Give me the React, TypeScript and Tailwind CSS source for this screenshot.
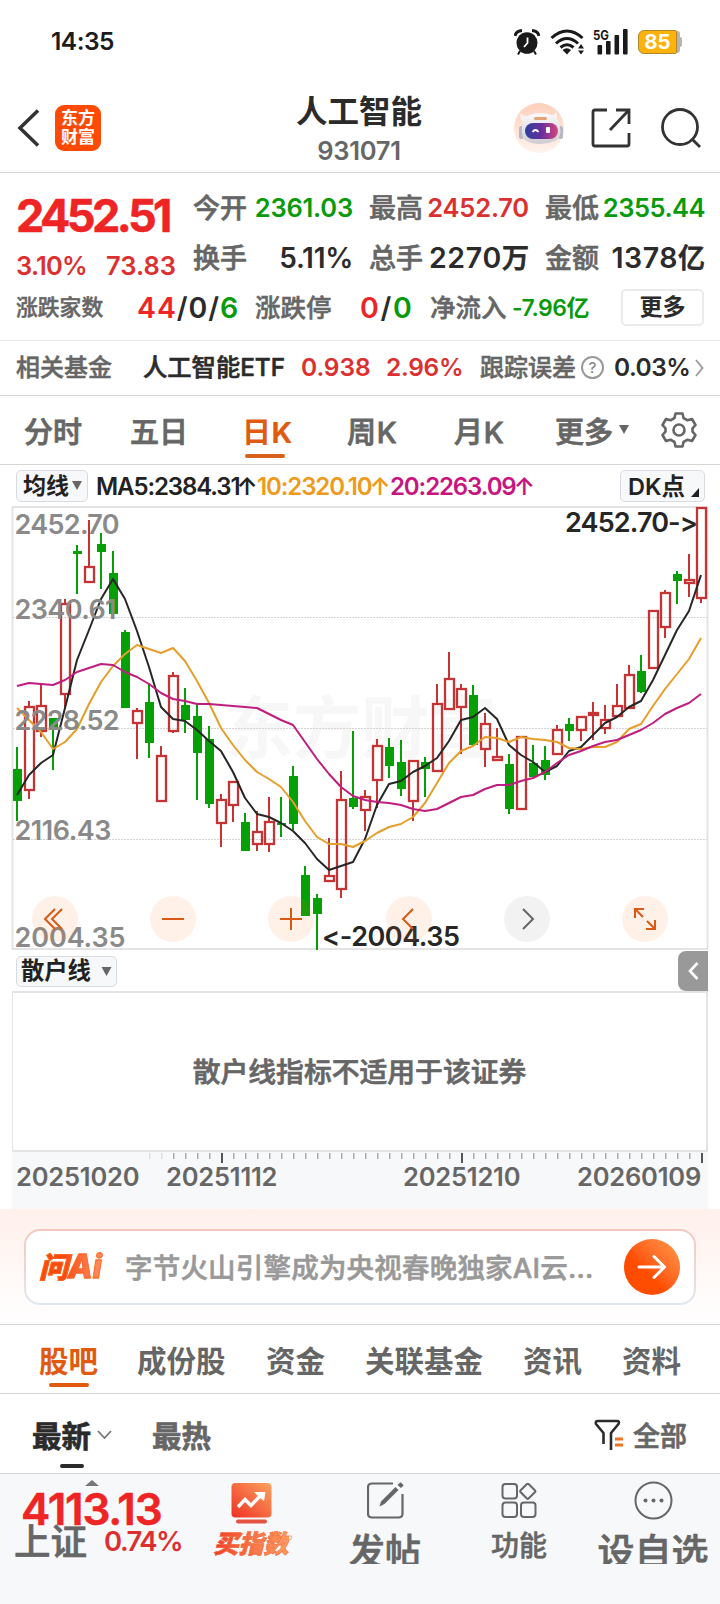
import type { ReactNode } from "react";

type Candle = [up: 0 | 1, high: number, top: number, bottom: number, low: number];

// y values are measured from the top edge of the chart svg
const CANDLES: Candle[] = [
  [0, 247, 269, 301, 321], [1, 201, 207, 290, 299], [1, 185, 206, 231, 237], [0, 218, 218, 228, 270],
  [1, 99, 104, 194, 208], [0, 45, 51, 54, 94], [1, 20, 67, 82, 83], [0, 33, 44, 52, 89],
  [0, 51, 73, 114, 114], [0, 130, 132, 208, 208], [1, 208, 211, 223, 259], [0, 183, 202, 243, 258],
  [1, 246, 256, 301, 301], [1, 172, 176, 231, 233], [0, 188, 205, 220, 233], [0, 203, 216, 253, 300],
  [0, 226, 239, 304, 308], [1, 294, 300, 323, 347], [1, 282, 282, 305, 322], [0, 313, 322, 351, 351],
  [1, 311, 332, 344, 351], [1, 297, 322, 344, 352], [0, 297, 323, 325, 337], [0, 266, 276, 324, 330],
  [0, 366, 375, 416, 416], [0, 394, 398, 414, 450], [1, 338, 376, 381, 381], [1, 271, 300, 389, 398],
  [0, 231, 298, 307, 309], [1, 290, 297, 310, 331], [1, 239, 246, 280, 308], [0, 238, 247, 266, 278],
  [0, 240, 262, 289, 296], [1, 261, 261, 301, 321], [0, 257, 262, 269, 297], [1, 184, 204, 271, 271],
  [1, 152, 179, 209, 209], [1, 184, 189, 207, 254], [0, 185, 195, 245, 245], [1, 213, 224, 249, 267],
  [1, 228, 257, 260, 260], [0, 254, 264, 309, 314], [1, 237, 237, 309, 309], [0, 245, 263, 277, 277],
  [0, 246, 260, 275, 280], [1, 225, 230, 254, 254], [0, 218, 224, 231, 241], [1, 217, 217, 230, 241],
  [1, 202, 213, 215, 240], [1, 205, 220, 228, 234], [1, 184, 206, 216, 216], [1, 165, 175, 208, 208],
  [0, 155, 171, 192, 193], [1, 110, 111, 168, 168], [1, 90, 93, 127, 138], [0, 71, 74, 81, 104],
  [1, 54, 80, 83, 97], [1, 8, 8, 98, 103],
];

const MA5 = [
  295, 275, 263, 255, 208, 160, 130, 99, 79, 99, 131, 167, 207, 219, 221, 230, 241, 251, 272, 298, 314, 317, 323, 331, 343,
  359, 370, 366, 362, 339, 305, 284, 281, 272, 266, 258, 241, 220, 217, 208, 219, 245, 255, 262, 272, 266, 251, 247, 235,
  223, 217, 207, 201, 180, 155, 130, 111, 75,
];
const MA10 = [
  208, 220, 232, 249, 242, 229, 204, 182, 166, 154, 145, 149, 153, 148, 161, 181, 203, 228, 245, 260, 272, 279, 287, 302,
  321, 337, 344, 344, 347, 341, 333, 327, 324, 317, 303, 283, 263, 251, 246, 237, 238, 242, 237, 239, 240, 242, 248, 249,
  247, 247, 242, 229, 224, 206, 189, 174, 159, 138,
];
const MA20 = [
  186, 183, 184, 185, 180, 172, 168, 164, 165, 172, 177, 184, 193, 199, 201, 204, 204, 205, 206, 207, 208, 214, 220, 225,
  242, 259, 274, 287, 296, 300, 302, 303, 305, 309, 311, 309, 303, 297, 295, 289, 285, 285, 281, 278, 272, 263, 255, 251,
  246, 242, 240, 235, 230, 223, 214, 208, 203, 194,
];

const AXIS_LABELS = [
  { text: "2452.70", y: 34, width: 105 },
  { text: "2340.61", y: 119, width: 102 },
  { text: "2228.52", y: 230, width: 105 },
  { text: "2116.43", y: 340, width: 97 },
  { text: "2004.35", y: 447, width: 111 },
];

const cx = (i: number) => 17 + i * 12;
const toPoints = (values: number[]) => values.map((v, i) => `${cx(i)},${v}`).join(" ");

function StatusBar() {
  return (
    <div className="flex h-[83px] items-center justify-between pl-[51px] pr-[38px]">
      <span className="text-[24.5px] font-semibold tracking-[-0.5px] text-[#1c1c1c]">14:35</span>
      <div className="flex items-center">
        <svg width="26" height="26" viewBox="0 0 26 26" fill="#1a1a1a">
          <ellipse cx="13" cy="14" rx="10.5" ry="10.8" />
          <path d="M1 7 Q2 2 8 1.5 M25 7 Q24 2 18 1.5" fill="none" stroke="#1a1a1a" strokeWidth="3" />
          <path d="M6 22 L4 25.5 M20 22 L22 25.5" stroke="#1a1a1a" strokeWidth="2" />
          <path d="M13.5 8.5 V14 L10 18" fill="none" stroke="#fff" strokeWidth="1.8" />
        </svg>
        <svg className="ml-[10px]" width="35" height="26" viewBox="0 0 35 26" fill="none" stroke="#1a1a1a" strokeWidth="3">
          <path d="M1.5 9 Q17 -5 32.5 9" />
          <path d="M6 14.5 Q17 4.5 28 14.5" />
          <path d="M10.5 18.5 Q17 13 23.5 18.5" />
          <path d="M12.5 21 Q17 17.5 21 21 L17 25.5 Z" fill="#1a1a1a" stroke="none" />
          <path d="M28 19.5 L31 15 L34 19.5 Z M28 21.5 L31 25.5 L34 21.5 Z" fill="#1a1a1a" stroke="none" />
        </svg>
        <svg className="ml-[8px]" width="36" height="27" viewBox="0 -1 36 27" fill="#1a1a1a">
          <text x="0" y="10.5" fontSize="13.5" fontWeight="700" textLength="16" lengthAdjust="spacingAndGlyphs">5G</text>
          <rect x="4.5" y="16" width="4.6" height="9.5" rx="1" />
          <rect x="13" y="12" width="4.6" height="13.5" rx="1" />
          <rect x="21.5" y="6" width="4.6" height="19.5" rx="1" />
          <rect x="30" y="0" width="4.6" height="25.5" rx="1" />
        </svg>
        <div className="ml-[9px] mt-[1px] flex items-center">
          <div className="flex h-6 w-[39px] items-center justify-center rounded-l-[6px] rounded-r-[2px] border border-[#b08a2a] bg-[#fdb30b] text-[20.5px] font-bold leading-none text-white">
            85
          </div>
          <div className="h-[22px] w-[3px] rounded-r-[4px] bg-[#b5b5b5]" />
          <div className="h-[10px] w-[2px] rounded-r-[2px] bg-[#b5b5b5]" />
        </div>
      </div>
    </div>
  );
}

function Header() {
  return (
    <header className="flex h-[90px] items-center border-b border-[#d6d6d6] pl-[17px] pr-[19px]">
      <div className="flex flex-1 items-center">
        <svg width="23" height="38" viewBox="0 0 23 38" fill="none" stroke="#333" strokeWidth="3.6">
          <path d="M21 1.5 L3 19 L21 36.5" />
        </svg>
        <div className="ml-[15px] flex h-[46px] w-[46px] flex-col items-center justify-center rounded-[9px] bg-[#ff4a05] text-[17px] font-bold leading-[19px] text-white">
          <span>东方</span>
          <span>财富</span>
        </div>
      </div>
      <div className="flex flex-col items-center pt-[5px]">
        <h1 className="text-[31.5px] font-bold leading-[36px] text-[#2b2b2b]">人工智能</h1>
        <span className="mt-[6px] text-[25.5px] font-semibold leading-[30px] tracking-[-0.3px] text-[#666]">931071</span>
      </div>
      <div className="flex flex-1 items-center justify-end">
        <svg width="50" height="50" viewBox="0 0 50 50">
          <defs>
            <linearGradient id="halo" x1="0" y1="0" x2="0" y2="1">
              <stop offset="0" stopColor="#fdd0bb" />
              <stop offset="1" stopColor="#fff3ee" />
            </linearGradient>
            <linearGradient id="visor" x1="0" y1="0" x2="1" y2="0">
              <stop offset="0" stopColor="#2d3f9e" />
              <stop offset="0.5" stopColor="#6a2f9c" />
              <stop offset="1" stopColor="#d6467e" />
            </linearGradient>
            <linearGradient id="shell" x1="0" y1="0" x2="0" y2="1">
              <stop offset="0" stopColor="#fbfafb" />
              <stop offset="1" stopColor="#cfccd3" />
            </linearGradient>
          </defs>
          <circle cx="25" cy="25" r="25" fill="url(#halo)" />
          <path d="M12 20 Q4 17 7 10 Q10 14 17 13 M38 19 Q46 16 42 9 Q40 13 33 13" fill="#f6f2f2" />
          <rect x="5" y="23" width="5" height="13" rx="2.5" fill="#b9b6c2" />
          <rect x="44" y="23" width="5" height="13" rx="2.5" fill="#b9b6c2" />
          <path d="M8 24 Q9 10 26 10 Q44 10 46 24 Q48 34 41 38 Q34 41 26 41 Q17 41 11 37 Q7 34 8 24 Z" fill="url(#shell)" />
          <rect x="20" y="14" width="13" height="3" rx="1.5" fill="#e3a478" />
          <rect x="11" y="20" width="33" height="16" rx="8" fill="url(#visor)" />
          <path d="M18.5 29 Q21.5 25 24.5 29" fill="none" stroke="#fff" strokeWidth="1.8" />
          <rect x="32" y="24" width="4" height="6" rx="1" fill="#fff" />
        </svg>
        <svg className="ml-[27px]" width="40" height="40" viewBox="0 0 40 40" fill="none" stroke="#333" strokeWidth="2.8">
          <path d="M16 2 H4 Q2 2 2 4 V36 Q2 38 4 38 H36 Q38 38 38 36 V25" />
          <path d="M25 2 H38 V16 M37 3 L19 22" />
        </svg>
        <svg className="ml-[30px]" width="40" height="40" viewBox="0 0 40 40" fill="none" stroke="#333" strokeWidth="2.8">
          <circle cx="19" cy="19" r="17.5" />
          <path d="M30.5 30.5 L39 39" />
        </svg>
      </div>
    </header>
  );
}

function Stat({ label, children }: { label: string; children: ReactNode }) {
  return (
    <div className="flex h-[50px] w-[160px] items-center justify-between whitespace-nowrap leading-none">
      <span className="pt-[1px] text-[27px] font-medium text-[#666] [-webkit-text-stroke:0.6px]">{label}</span>
      {children}
    </div>
  );
}

function Quote() {
  return (
    <section className="h-[168px] border-b border-[#e8e8e8]">
      <div className="flex">
        <div className="w-[193px] shrink-0 pl-[16px] pt-[19px] text-[#ee2524]">
          <div className="text-[45px] font-bold leading-[48px] tracking-[-3.6px] [-webkit-text-stroke:0.5px]">2452.51</div>
          <div className="mt-[12px] flex text-[25.5px] font-semibold leading-[28px] tracking-[-0.5px] text-[#dc3030]">
            <span className="w-[90px] tracking-[-0.8px]">3.10%</span>
            <span className="tracking-[0px]">73.83</span>
          </div>
        </div>
        <div className="grid grid-cols-3 gap-x-4 pt-[10px]">
          <Stat label="今开">
            <span className="text-[25.5px] font-semibold tracking-[-0.2px] text-[#079a0a]">2361.03</span>
          </Stat>
          <Stat label="最高">
            <span className="text-[25.5px] font-semibold tracking-[-0.2px] text-[#dc3030]">2452.70</span>
          </Stat>
          <Stat label="最低">
            <span className="text-[25.5px] font-semibold tracking-[-0.5px] text-[#079a0a]">2355.44</span>
          </Stat>
          <Stat label="换手">
            <span className="text-[28px] font-semibold tracking-[-0.3px] text-[#2b2b2b]">5.11%</span>
          </Stat>
          <Stat label="总手">
            <span className="text-[28.5px] font-semibold tracking-[0.7px] text-[#2b2b2b]">
              2270<span className="text-[27px] font-medium tracking-[0px] [-webkit-text-stroke:0.8px]">万</span>
            </span>
          </Stat>
          <Stat label="金额">
            <span className="text-[28.5px] font-semibold tracking-[0.5px] text-[#2b2b2b]">
              1378<span className="text-[27px] font-medium tracking-[0px] [-webkit-text-stroke:0.8px]">亿</span>
            </span>
          </Stat>
        </div>
      </div>
      <div className="flex h-[50px] items-center whitespace-nowrap pl-[16px] font-medium leading-none text-[#666]">
        <span className="w-[121px] text-[21.8px] [-webkit-text-stroke:0.5px]">涨跌家数</span>
        <span className="w-[118px] text-[28.5px] font-semibold tracking-[0.9px] text-[#2b2b2b]">
          <span className="text-[#ee2524]">44</span>/0/<span className="text-[#079a0a]">6</span>
        </span>
        <span className="w-[105px] text-[25.5px] [-webkit-text-stroke:0.5px]">涨跌停</span>
        <span className="w-[70px] text-[28.5px] font-semibold tracking-[1.7px] text-[#2b2b2b]">
          <span className="text-[#ee2524]">0</span>/<span className="text-[#079a0a]">0</span>
        </span>
        <span className="w-[82px] text-[25.5px] [-webkit-text-stroke:0.5px]">净流入</span>
        <span className="w-[109px] text-[23px] font-semibold tracking-[-0.5px] text-[#079a0a]">-7.96亿</span>
        <span className="flex h-[37px] w-[83px] -translate-y-px items-center justify-center rounded-[5px] border-2 border-[#ebebeb] text-[23px] font-bold text-[#2b2b2b]">
          更多
        </span>
      </div>
    </section>
  );
}

function FundRow() {
  return (
    <section className="flex h-[55px] items-center whitespace-nowrap border-b border-[#d6d6d6] pb-[1px] pl-[16px] leading-none text-[#2b2b2b]">
      <span className="w-[127px] text-[24px] font-medium text-[#666] [-webkit-text-stroke:0.5px]">相关基金</span>
      <span className="w-[158px] text-[24.3px] font-medium [-webkit-text-stroke:0.6px]">人工智能ETF</span>
      <span className="w-[85px] text-[24.5px] font-semibold tracking-[-0.1px] text-[#dc3030]">0.938</span>
      <span className="w-[94px] text-[24.5px] font-semibold tracking-[-0.3px] text-[#dc3030]">2.96%</span>
      <span className="w-[101px] text-[24px] font-medium text-[#666] [-webkit-text-stroke:0.5px]">跟踪误差</span>
      <span className="flex h-[23px] w-[23px] items-center justify-center rounded-full border-2 border-[#999] text-[15px] font-medium text-[#888]">
        ?
      </span>
      <span className="ml-[10px] w-[81px] text-[24.5px] font-semibold tracking-[-0.5px]">0.03%</span>
      <svg width="9" height="18" viewBox="0 0 9 18" fill="none" stroke="#999" strokeWidth="1.8">
        <path d="M1 1 L7.5 9 L1 17" />
      </svg>
    </section>
  );
}

function PeriodTabs() {
  return (
    <nav className="flex h-[69px] items-center whitespace-nowrap border-b border-[#d6d6d6] pl-[24px] pt-[4px] text-[29px] font-medium leading-none text-[#666] [-webkit-text-stroke:0.8px]">
      <span className="w-[106px]">分时</span>
      <span className="w-[112px]">五日</span>
      <span className="relative w-[105px] font-bold tracking-[0.4px] text-[#e05a10] [-webkit-text-stroke:0px]">
        日K
        <span className="absolute -bottom-[11px] left-[3px] h-[4px] w-[40px] rounded-full bg-[#d9601a]" />
      </span>
      <span className="w-[107px] tracking-[0.8px]">周K</span>
      <span className="w-[101px] tracking-[0.8px]">月K</span>
      <span className="w-[64px]">更多</span>
      <svg className="-mt-[5px]" width="10" height="9" viewBox="0 0 10 9" fill="#666">
        <path d="M0 0 H10 L5 9 Z" />
      </svg>
      <svg className="ml-[32px] -mt-[5px]" width="36" height="36" viewBox="0 0 36 36" fill="none" stroke="#666" strokeWidth="2.6" strokeLinejoin="round">
        <path d="M14.5 1.5 H21.5 L22.5 6 L26.5 8.3 L31 7 L34.5 13 L31.5 16.3 V19.7 L34.5 23 L31 29 L26.5 27.7 L22.5 30 L21.5 34.5 H14.5 L13.5 30 L9.5 27.7 L5 29 L1.5 23 L4.5 19.7 V16.3 L1.5 13 L5 7 L9.5 8.3 L13.5 6 Z" />
        <circle cx="18" cy="18" r="5.5" />
      </svg>
    </nav>
  );
}

function MaRow() {
  return (
    <div className="flex h-[41px] items-center whitespace-nowrap pl-[16px] leading-none text-[#222]">
      <div className="flex h-[32px] w-[72px] items-center rounded-[5px] border border-[#d8dbe0] bg-[#f7f8fa] pl-[6px]">
        <span className="pt-[1px] text-[23px] font-bold">均线</span>
        <svg className="ml-[3px]" width="10" height="9" viewBox="0 0 10 9" fill="#666">
          <path d="M0 0 H10 L5 9 Z" />
        </svg>
      </div>
      <div className="ml-[8px] flex w-[524px] pt-[2px] text-[24px] font-semibold tracking-[-1.1px]">
        <span className="w-[161px]">
          MA5:2384.31<span className="-ml-[3px]">↑</span>
        </span>
        <span className="w-[133px] text-[#ee9a1c]">
          10:2320.10<span className="-ml-[2px]">↑</span>
        </span>
        <span className="text-[#c7157f]">
          20:2263.09<span className="-ml-[2px]">↑</span>
        </span>
      </div>
      <div className="flex h-[32px] w-[85px] items-center rounded-[5px] border border-[#d8dbe0] bg-[#f7f8fa] pl-[7px]">
        <span className="w-[63px] pt-[2px] text-[23.5px] font-semibold">DK点</span>
        <svg className="mt-[13px]" width="8" height="9" viewBox="0 0 8 9" fill="#222">
          <path d="M8 0 V9 H0 Z" />
        </svg>
      </div>
    </div>
  );
}

function Chart() {
  return (
    <svg className="-mt-[6px] block [font-feature-settings:'calt'_0]" width="720" height="451" viewBox="0 0 720 451">
      <text x="225" y="253" fontSize="68" fontWeight="700" fill="#f7f7f8" textLength="272">东方财富</text>
      <rect x="12.5" y="7" width="695" height="442" fill="none" stroke="#e2e2e4" strokeWidth="1.8" />
      {[117.5, 228.5, 339.5].map((y) => (
        <path key={y} d={`M13 ${y} H707`} stroke="#d4d4d4" strokeDasharray="2 1" />
      ))}
      {CANDLES.map(([up, high, top, bottom, low], i) =>
        up ? (
          <g key={i} stroke="#c43434" strokeWidth="2" fill="none">
            <path d={`M${cx(i)} ${high} V${top} M${cx(i)} ${bottom} V${low}`} />
            <rect x={cx(i) - 4} y={top} width="9" height={bottom - top} strokeWidth="2.3" />
          </g>
        ) : (
          <g key={i} fill="#04a006">
            <rect x={cx(i) - 1} y={high} width="2" height={low - high} />
            <rect x={cx(i) - 4} y={top} width="9" height={bottom - top} />
          </g>
        ),
      )}
      <g fill="none" strokeWidth="2" strokeLinejoin="round">
        <polyline points={toPoints(MA5)} stroke="#262626" />
        <polyline points={toPoints(MA10)} stroke="#e59e2a" />
        <polyline points={toPoints(MA20)} stroke="#bf1d80" />
      </g>
      <g fontSize="27" fontWeight="600" fill="#8a8a8a">
        {AXIS_LABELS.map(({ text, y, width }) => (
          <text key={text} x="14.5" y={y} textLength={width}>{text}</text>
        ))}
      </g>
      <g fontSize="27" fontWeight="600" fill="#262626">
        <text x="565" y="32" textLength="133">2452.70-&gt;</text>
        <text x="322" y="446" textLength="138">&lt;-2004.35</text>
      </g>
      {[55, 173, 291, 409, 645].map((x) => (
        <circle key={x} cx={x} cy="419" r="23" fill="#ff6a1e" fillOpacity="0.1" />
      ))}
      <circle cx="527" cy="419" r="23" fill="#000" fillOpacity="0.05" />
      <g fill="none" stroke="#d95a15" strokeWidth="2">
        <path d="M55 409 L45 419 L55 429 M62 409 L52 419 L62 429" />
        <path d="M162 419 H184" />
        <path d="M280 419 H302 M291 408 V430" />
        <path d="M413 409 L403 419 L413 429" />
        <path d="M635 418 V409 H644 M635 409 L643 417 M655 420 V429 H646 M655 429 L647 421" />
      </g>
      <path d="M523 409 L533 419 L523 429" fill="none" stroke="#666" strokeWidth="2" />
    </svg>
  );
}

function RetailPanel() {
  return (
    <section className="px-[12px]">
      <div className="flex h-[40px] items-center justify-between leading-none">
        <div className="ml-[4px] flex h-[31px] w-[101px] items-center rounded-[5px] border border-[#d8dbe0] bg-[#f7f8fa] pl-[4px]">
          <span className="text-[23.3px] font-bold text-[#222]">散户线</span>
          <svg className="ml-[10px]" width="11" height="9" viewBox="0 0 10 9" fill="#666">
            <path d="M0 0 H10 L5 9 Z" />
          </svg>
        </div>
        <div className="flex h-[40px] w-[30px] items-center rounded-l-[8px] bg-[#999] pl-[10px]">
          <svg width="11" height="18" viewBox="0 0 11 18" fill="none" stroke="#fff" strokeWidth="2.6">
            <path d="M9.5 1 L2 9 L9.5 17" />
          </svg>
        </div>
      </div>
      <div className="flex h-[161px] items-center justify-center border-2 border-l border-[#e4e4e6] pt-[2px] text-[27.8px] font-medium text-[#666] [-webkit-text-stroke:0.7px]">
        散户线指标不适用于该证券
      </div>
      <div className="h-[57px] bg-[#f7f8fa]">
        <svg className="block" width="696" height="12" viewBox="12 0 696 12">
          {Array.from({ length: 47 }, (_, i) => {
            const major = i % 20 === 6;
            return (
              <rect
                key={i}
                x={149 + i * 12}
                y="1"
                width={major ? 2 : 1.5}
                height={major ? 10 : 6}
                fill={major ? "#555" : i < 2 ? "#ddd" : "#aaa"}
              />
            );
          })}
        </svg>
        <div className="mt-[1px] flex h-[24px] items-center text-[25.5px] font-semibold leading-none tracking-[-0.2px] text-[#666]">
          <span className="w-[154px] pl-[4px]">20251020</span>
          <span className="w-[237px]">20251112</span>
          <span className="w-[174px]">20251210</span>
          <span>20260109</span>
        </div>
      </div>
    </section>
  );
}

function AskAi() {
  return (
    <section className="h-[116px] border-b border-[#d6d6d6] bg-gradient-to-b from-[#fff0eb] to-white px-[24px] pt-[20px]">
      <div className="h-[76px] rounded-[16px] bg-gradient-to-b from-[#f5c6bc] to-[#dde8f0] p-[2px]">
        <div className="flex h-full items-center whitespace-nowrap rounded-[14px] bg-white pl-[13px] leading-none">
          <span className="w-[86px] bg-gradient-to-r from-[#fa4b0c] from-30% to-[#ff9160] to-75% bg-clip-text text-[32px] font-extrabold italic leading-[40px] text-transparent [-webkit-text-stroke:0.8px_#ff6420]">
            <span className="text-[29px]">问</span>Ai
          </span>
          <span className="w-[499px] pt-[3px] text-[27.5px] font-medium tracking-[0.2px] text-[#999] [-webkit-text-stroke:0.6px]">
            字节火山引擎成为央视春晚独家AI云...
          </span>
          <span className="flex h-[56px] w-[56px] items-center justify-center rounded-full bg-gradient-to-tr from-[#ff4d00] from-40% to-[#ff9a4a]">
            <svg width="30" height="26" viewBox="0 0 30 26" fill="none" stroke="#fff" strokeWidth="3" strokeLinecap="round" strokeLinejoin="round">
              <path d="M2 13 H27 M17 2.5 L27.5 13 L17 23.5" />
            </svg>
          </span>
        </div>
      </div>
    </section>
  );
}

function ContentTabs() {
  return (
    <nav className="flex h-[69px] items-center whitespace-nowrap border-b border-[#d6d6d6] pl-[39px] pt-[5px] text-[29.5px] font-bold leading-none text-[#666]">
      <span className="relative w-[98px] text-[#e05a10]">
        股吧
        <span className="absolute -bottom-[11px] left-[10px] h-[4px] w-[40px] rounded-full bg-[#e05a10]" />
      </span>
      <span className="w-[129px]">成份股</span>
      <span className="w-[99px]">资金</span>
      <span className="w-[158px]">关联基金</span>
      <span className="w-[99px]">资讯</span>
      <span>资料</span>
    </nav>
  );
}

function SortRow() {
  return (
    <div className="flex h-[80px] items-center whitespace-nowrap border-b border-[#d6d6d6] pl-[32px] text-[29.5px] font-bold leading-none text-[#666] [-webkit-text-stroke:0.7px]">
      <span className="relative pt-[6px] text-[#2b2b2b]">
        最新
        <span className="absolute -bottom-[17px] left-[28px] h-[4px] w-[24px] rounded-full bg-[#2b2b2b]" />
      </span>
      <svg className="ml-[6px] mt-[2px]" width="15" height="9" viewBox="0 0 15 9" fill="none" stroke="#777" strokeWidth="1.8">
        <path d="M1 1 L7.5 8 L14 1" />
      </svg>
      <span className="ml-[40px] pt-[6px]">最热</span>
      <svg className="ml-auto mt-[2px]" width="30" height="32" viewBox="0 0 30 32" fill="none" stroke="#2b2b2b" strokeWidth="2.6">
        <path d="M9.5 25 V14 L2 5 Q1 2 4 2 H23 Q26 2 24.5 5 L17 14 V31" strokeLinejoin="round" />
        <path d="M21 20 H29 M21 26 H29" stroke="#ec7320" strokeWidth="3" />
      </svg>
      <span className="ml-[9px] mr-[33px] pt-[6px] text-[27px] font-medium">全部</span>
    </div>
  );
}

function BottomBar() {
  return (
    <footer className="flex h-[130px] items-start whitespace-nowrap bg-[#f7f8fa] leading-none text-[#666]">
      <div className="w-[205px] pl-[14px] pt-[6px]">
        <svg className="ml-[71px] block" width="14" height="6" viewBox="0 0 14 6" fill="#777">
          <path d="M7 0 L14 6 H0 Z" />
        </svg>
        <div className="-mt-[3px] ml-[7px] text-[44px] font-semibold leading-[52px] tracking-[-1.2px] text-[#ee2524] [-webkit-text-stroke:0.5px]">
          4113.13
        </div>
        <div className="-mt-[13px] flex items-center">
          <span className="text-[36.5px] font-medium leading-[40px] [-webkit-text-stroke:0.7px]">上证</span>
          <span className="ml-[17px] text-[27.5px] font-semibold tracking-[-1.5px] text-[#dc3030]">0.74%</span>
        </div>
      </div>
      <div className="flex w-[92px] flex-col items-center pt-[9px]">
        <svg width="41" height="41" viewBox="0 0 41 41">
          <defs>
            <linearGradient id="buy" x1="0" y1="1" x2="1" y2="0">
              <stop offset="0" stopColor="#ee3124" />
              <stop offset="1" stopColor="#fda35e" />
            </linearGradient>
          </defs>
          <rect x="0.5" y="0" width="40" height="34.5" rx="4" fill="url(#buy)" />
          <rect x="5" y="36.5" width="31" height="4" rx="2" fill="#e4533f" />
          <path d="M7 24 L14 16.5 L20 22.5 L30 12" fill="none" stroke="#fff" strokeWidth="3.4" />
          <path d="M23 9 H34.5 L33 18 L29 15 Z" fill="#fff" />
        </svg>
        <span className="mt-[5px] bg-gradient-to-r from-[#ef3a28] to-[#fd9c5c] bg-clip-text text-[25px] font-black italic leading-[30px] text-transparent [-webkit-text-stroke:0.5px_#f46a40]">
          买指数
        </span>
      </div>
      <div className="flex h-[90px] w-[176px] flex-col items-center overflow-hidden pt-[8px]">
        <svg className="shrink-0" width="37" height="37" viewBox="0 0 37 37" fill="none" stroke="#666" strokeWidth="2.2">
          <path d="M26 1.5 H5 Q1 1.5 1 5.500 V31.500 Q1 35.500 5 35.500 H31.500 Q35.500 35.500 35.500 31.500 V12" />
          <path d="M12.5 24.5 L14 19.5 L28.500 5 L31.500 8 L17.500 22 Z" fill="#666" stroke="none" />
          <path d="M30.500 3 L33.500 0.200 L36.700 3.200 L34 6 Z" fill="#666" stroke="none" />
        </svg>
        <span className="mt-[15px] shrink-0 text-[36px] font-medium [-webkit-text-stroke:0.7px]">发帖</span>
      </div>
      <div className="flex w-[92px] flex-col items-center pt-[9px]">
        <svg width="36" height="36" viewBox="0 0 36 36" fill="none" stroke="#666" strokeWidth="2">
          <rect x="1.5" y="1" width="14.5" height="14.5" rx="3" />
          <rect x="1.5" y="19.5" width="14.5" height="14.5" rx="3" />
          <rect x="20" y="19.5" width="14.5" height="14.5" rx="3" />
          <rect x="21" y="2.5" width="11.5" height="11.5" rx="1.5" transform="rotate(45 26.75 8.25)" />
        </svg>
        <span className="mt-[12px] text-[28px] font-medium leading-[30px] [-webkit-text-stroke:0.5px]">功能</span>
      </div>
      <div className="flex h-[90px] flex-1 flex-col items-center overflow-hidden pl-[21px] pt-[7px]">
        <svg className="shrink-0" width="39" height="39" viewBox="0 0 39 39" fill="none" stroke="#666" strokeWidth="2">
          <circle cx="19.5" cy="19.5" r="18" />
          <g fill="#666" stroke="none">
            <circle cx="11.5" cy="19.5" r="2" />
            <circle cx="19.5" cy="19.5" r="2" />
            <circle cx="27.5" cy="19.5" r="2" />
          </g>
        </svg>
        <span className="mt-[14px] shrink-0 text-[37px] font-medium [-webkit-text-stroke:0.7px]">设自选</span>
      </div>
    </footer>
  );
}

export default function App() {
  return (
    <main className="h-[1604px] w-[720px] overflow-hidden bg-white font-['Inter','Noto_Sans_CJK_SC',sans-serif]">
      <StatusBar />
      <Header />
      <Quote />
      <FundRow />
      <PeriodTabs />
      <MaRow />
      <Chart />
      <RetailPanel />
      <AskAi />
      <ContentTabs />
      <SortRow />
      <BottomBar />
    </main>
  );
}
